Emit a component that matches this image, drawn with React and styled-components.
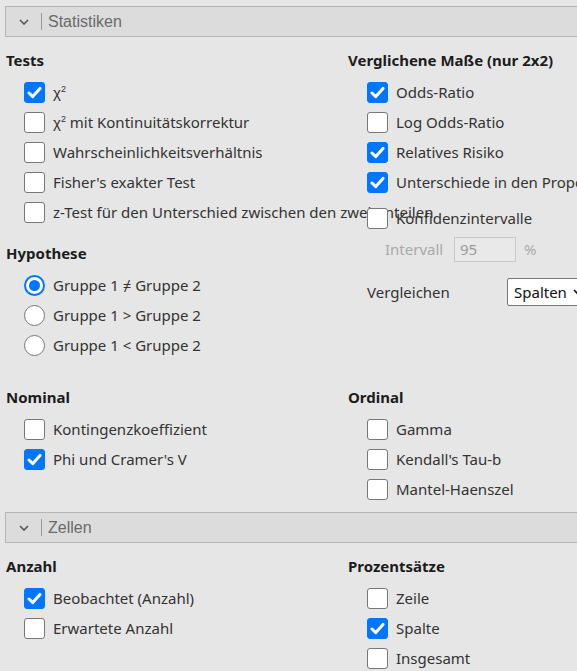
import React from "react";
import styled, { createGlobalStyle } from "styled-components";

const GlobalStyle = createGlobalStyle`
  html, body {
    margin: 0;
    padding: 0;
    background: #e6e6e6;
    overflow: hidden;
  }
  body {
    font-family: "Segoe UI", "Noto Sans", sans-serif;
    color: #333;
  }
`;

const Page = styled.div`
  width: 640px;
  padding: 6px 0 0 5px;
`;

const SectionHeader = styled.div`
  display: flex;
  align-items: center;
  height: 29px;
  background: #dcdcdc;
  border: 1px solid #b5b5b5;
`;

const Chevron = styled.span`
  display: flex;
  width: 35px;
  justify-content: center;
  color: #555;
`;

const Divider = styled.span`
  width: 1px;
  height: 17px;
  background: #9a9a9a;
`;

const SectionTitle = styled.span`
  padding-left: 6px;
  font-family: "Liberation Sans", Arial, sans-serif;
  font-size: 16px;
  color: #6a6a6a;
`;

const SectionBody = styled.div`
  display: flex;
  flex-direction: column;
  gap: 26px;
  padding: 12px 0 8px 1px;
`;

const Columns = styled.div`
  display: grid;
  grid-template-columns: 342px 1fr;
`;

const Column = styled.div`
  display: flex;
  flex-direction: column;
`;

const GroupTitle = styled.div`
  height: 22px;
  line-height: 22px;
  font-size: 15px;
  font-weight: 700;
  color: #1c1c1c;
  margin-top: ${(p) => p.$gap || 0}px;
  margin-bottom: 6px;
`;

const Row = styled.div`
  display: flex;
  align-items: center;
  height: 30px;
  padding-left: ${(p) => p.$indent ?? 18}px;
  margin-top: ${(p) => p.$gap || 0}px;
  white-space: nowrap;
`;

const Box = styled.span`
  flex: none;
  box-sizing: border-box;
  width: 21px;
  height: 21px;
  border-radius: 3px;
  border: 1px solid ${(p) => (p.$on ? "#0075ff" : "#777")};
  background: ${(p) => (p.$on ? "#0075ff" : "#fff")};
  display: flex;
  align-items: center;
  justify-content: center;
`;

const Radio = styled.span`
  flex: none;
  box-sizing: border-box;
  width: 21px;
  height: 21px;
  border-radius: 50%;
  border: ${(p) => (p.$on ? "2px solid #0075ff" : "1px solid #777")};
  background: #fff;
  display: flex;
  align-items: center;
  justify-content: center;
  &::after {
    content: "";
    display: ${(p) => (p.$on ? "block" : "none")};
    width: 11px;
    height: 11px;
    border-radius: 50%;
    background: #0075ff;
  }
`;

const Label = styled.span`
  padding-left: 8px;
  font-size: 15px;
  color: #333;
`;

const Sup = styled.sup`
  font-size: 9px;
  vertical-align: 6px;
`;

const Chi = styled.span`
  font-family: "Liberation Sans", Arial, sans-serif;
`;

const Muted = styled.span`
  font-size: 15px;
  color: #a9a9a9;
  width: 69px;
`;

const NumInput = styled.span`
  box-sizing: border-box;
  width: 62px;
  height: 25px;
  line-height: 23px;
  padding-left: 5px;
  border: 1px solid #c9c9c9;
  background: #e9e9e9;
  font-size: 15px;
  color: #9a9a9a;
`;

const Unit = styled.span`
  padding-left: 8px;
  font-size: 15px;
  color: #aaa;
`;

const Plain = styled.span`
  font-size: 15px;
  color: #333;
  width: 140px;
`;

const Select = styled.span`
  box-sizing: border-box;
  display: flex;
  align-items: center;
  gap: 6px;
  width: 90px;
  height: 28px;
  padding-left: 6px;
  background: #fff;
  border: 1px solid #767676;
  border-radius: 2px;
  font-size: 15px;
  color: #111;
`;

const Tick = () => (
  <svg width="15" height="13" viewBox="0 0 15 13">
    <path d="M2 7 L5.8 10.6 L13 2.4" fill="none" stroke="#fff" strokeWidth="3" strokeLinecap="round" strokeLinejoin="round" />
  </svg>
);

const Check = ({ on, children, indent, gap }) => (
  <Row $indent={indent} $gap={gap}>
    <Box $on={on}>{on && <Tick />}</Box>
    <Label>{children}</Label>
  </Row>
);

const Option = ({ on, children }) => (
  <Row>
    <Radio $on={on} />
    <Label>{children}</Label>
  </Row>
);

const Header = ({ title }) => (
  <SectionHeader>
    <Chevron>
      <svg width="10" height="6" viewBox="0 0 10 6">
        <path d="M1 1 L5 5 L9 1" fill="none" stroke="#555" strokeWidth="1.6" />
      </svg>
    </Chevron>
    <Divider />
    <SectionTitle>{title}</SectionTitle>
  </SectionHeader>
);

export default function App() {
  return (
    <>
      <GlobalStyle />
      <Page>
        <Header title="Statistiken" />
        <SectionBody>
          <Columns>
            <Column>
              <GroupTitle>Tests</GroupTitle>
              <Check on>
                <Chi>χ<Sup>2</Sup></Chi>
              </Check>
              <Check>
                <Chi>χ<Sup>2</Sup></Chi> mit Kontinuitätskorrektur
              </Check>
              <Check>Wahrscheinlichkeitsverhältnis</Check>
              <Check>Fisher's exakter Test</Check>
              <Check>z-Test für den Unterschied zwischen den zwei Anteilen</Check>
              <GroupTitle $gap={15}>Hypothese</GroupTitle>
              <Option on>Gruppe 1 ≠ Gruppe 2</Option>
              <Option>Gruppe 1 &gt; Gruppe 2</Option>
              <Option>Gruppe 1 &lt; Gruppe 2</Option>
            </Column>
            <Column>
              <GroupTitle>Verglichene Maße (nur 2x2)</GroupTitle>
              <Check on indent={19}>Odds-Ratio</Check>
              <Check indent={19}>Log Odds-Ratio</Check>
              <Check on indent={19}>Relatives Risiko</Check>
              <Check on indent={19}>Unterschiede in den Proportionen</Check>
              <Check indent={19} gap={6}>Konfidenzintervalle</Check>
              <Row $indent={37} $gap={3} style={{ height: 26 }}>
                <Muted>Intervall</Muted>
                <NumInput>95</NumInput>
                <Unit>%</Unit>
              </Row>
              <Row $indent={19} $gap={15}>
                <Plain>Vergleichen</Plain>
                <Select>
                  Spalten
                  <svg width="10" height="6" viewBox="0 0 10 6">
                    <path d="M1 1 L5 5 L9 1" fill="none" stroke="#111" strokeWidth="1.6" />
                  </svg>
                </Select>
              </Row>
            </Column>
          </Columns>
          <Columns>
            <Column>
              <GroupTitle>Nominal</GroupTitle>
              <Check>Kontingenzkoeffizient</Check>
              <Check on>Phi und Cramer's V</Check>
            </Column>
            <Column>
              <GroupTitle>Ordinal</GroupTitle>
              <Check indent={19}>Gamma</Check>
              <Check indent={19}>Kendall's Tau-b</Check>
              <Check indent={19}>Mantel-Haenszel</Check>
            </Column>
          </Columns>
        </SectionBody>
        <Header title="Zellen" />
        <SectionBody>
          <Columns>
            <Column>
              <GroupTitle>Anzahl</GroupTitle>
              <Check on>Beobachtet (Anzahl)</Check>
              <Check>Erwartete Anzahl</Check>
            </Column>
            <Column>
              <GroupTitle>Prozentsätze</GroupTitle>
              <Check indent={19}>Zeile</Check>
              <Check on indent={19}>Spalte</Check>
              <Check indent={19}>Insgesamt</Check>
            </Column>
          </Columns>
        </SectionBody>
      </Page>
    </>
  );
}
